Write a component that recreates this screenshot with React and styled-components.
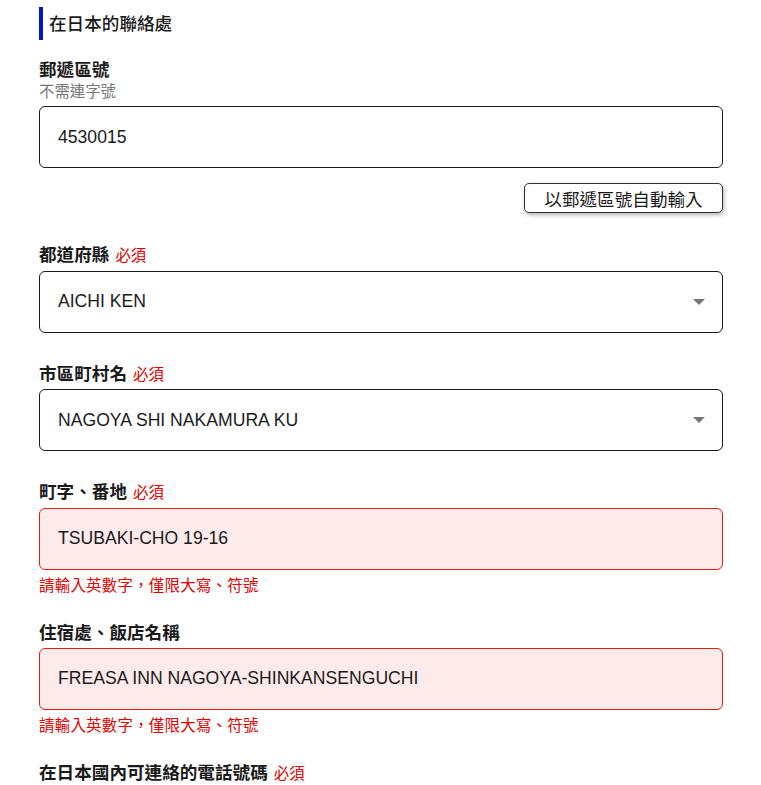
import React from 'react'
import styled, { createGlobalStyle } from 'styled-components'

const GlobalStyle = createGlobalStyle`
  html, body {
    margin: 0;
    padding: 0;
    background: #fff;
  }
  body {
    font-family: 'Liberation Sans', 'Noto Sans CJK TC', Arial, sans-serif;
    color: #1a1a1a;
  }
`

const Page = styled.div`
  padding: 7px 38px 0 39px;
`

const SectionTitle = styled.h2`
  margin: 0 0 18px;
  height: 33px;
  display: flex;
  align-items: center;
  border-left: 4px solid #0017c1;
  padding-left: 6px;
  font-size: 17.6px;
  font-weight: 500;
  line-height: 24px;
`

const Field = styled.div`
  margin-bottom: ${props => (props.$error ? '26px' : '29px')};
`

const LabelBlock = styled.div`
  margin-bottom: ${props => (props.$tight ? '2.5px' : '4px')};
`

const Label = styled.label`
  display: block;
  font-size: 17.6px;
  font-weight: 700;
  line-height: 24px;
`

const Required = styled.span`
  margin-left: 6px;
  color: #e00000;
  font-size: 15.4px;
  font-weight: 400;
`

const Hint = styled.div`
  color: #767676;
  font-size: 15.4px;
  line-height: 20px;
`

const Box = styled.div`
  position: relative;
  box-sizing: border-box;
  height: 62px;
  display: flex;
  align-items: center;
  padding: 0 18px;
  border: 1px solid ${props => (props.$error ? '#e02010' : '#1a1a1a')};
  border-radius: 6px;
  background: ${props => (props.$error ? '#fdeaea' : '#fff')};
  font-size: 17.6px;
`

const Arrow = styled.span`
  position: absolute;
  right: 17px;
  top: 50%;
  margin-top: -3px;
  width: 0;
  height: 0;
  border-left: 6px solid transparent;
  border-right: 6px solid transparent;
  border-top: 6px solid #767676;
`

const ErrorText = styled.div`
  margin-top: 7.5px;
  color: #e00000;
  font-size: 15.4px;
  line-height: 18px;
  letter-spacing: 0.3px;
`

const ButtonRow = styled.div`
  display: flex;
  justify-content: flex-end;
  margin: 15px 0 30px;
`

const AutoButton = styled.button`
  box-sizing: border-box;
  height: 30px;
  width: 199px;
  padding: 0;
  border: 1px solid #333;
  border-radius: 5px;
  background: #fff;
  box-shadow: 1px 2px 4px rgba(0, 0, 0, 0.3);
  font-family: 'Noto Sans CJK TC', sans-serif;
  font-size: 17.6px;
  color: #1a1a1a;
`

function FormField({ label, required, hint, value, select, error }) {
  return (
    <Field $error={!!error}>
      <LabelBlock $tight>
        <Label>
          {label}
          {required && <Required>必須</Required>}
        </Label>
        {hint && <Hint>{hint}</Hint>}
      </LabelBlock>
      <Box $error={!!error}>
        {value}
        {select && <Arrow />}
      </Box>
      {error && <ErrorText>{error}</ErrorText>}
    </Field>
  )
}

const ERR = '請輸入英數字，僅限大寫、符號'

export default function App() {
  return (
    <Page>
      <GlobalStyle />
      <SectionTitle>在日本的聯絡處</SectionTitle>
      <LabelBlock>
        <Label>郵遞區號</Label>
        <Hint>不需連字號</Hint>
      </LabelBlock>
      <Box>4530015</Box>
      <ButtonRow>
        <AutoButton>以郵遞區號自動輸入</AutoButton>
      </ButtonRow>
      <FormField label="都道府縣" required value="AICHI KEN" select />
      <FormField label="市區町村名" required value="NAGOYA SHI NAKAMURA KU" select />
      <FormField label="町字、番地" required value="TSUBAKI-CHO 19-16" error={ERR} />
      <FormField label="住宿處、飯店名稱" value="FREASA INN NAGOYA-SHINKANSENGUCHI" error={ERR} />
      <FormField label="在日本國內可連絡的電話號碼" required />
    </Page>
  )
}
